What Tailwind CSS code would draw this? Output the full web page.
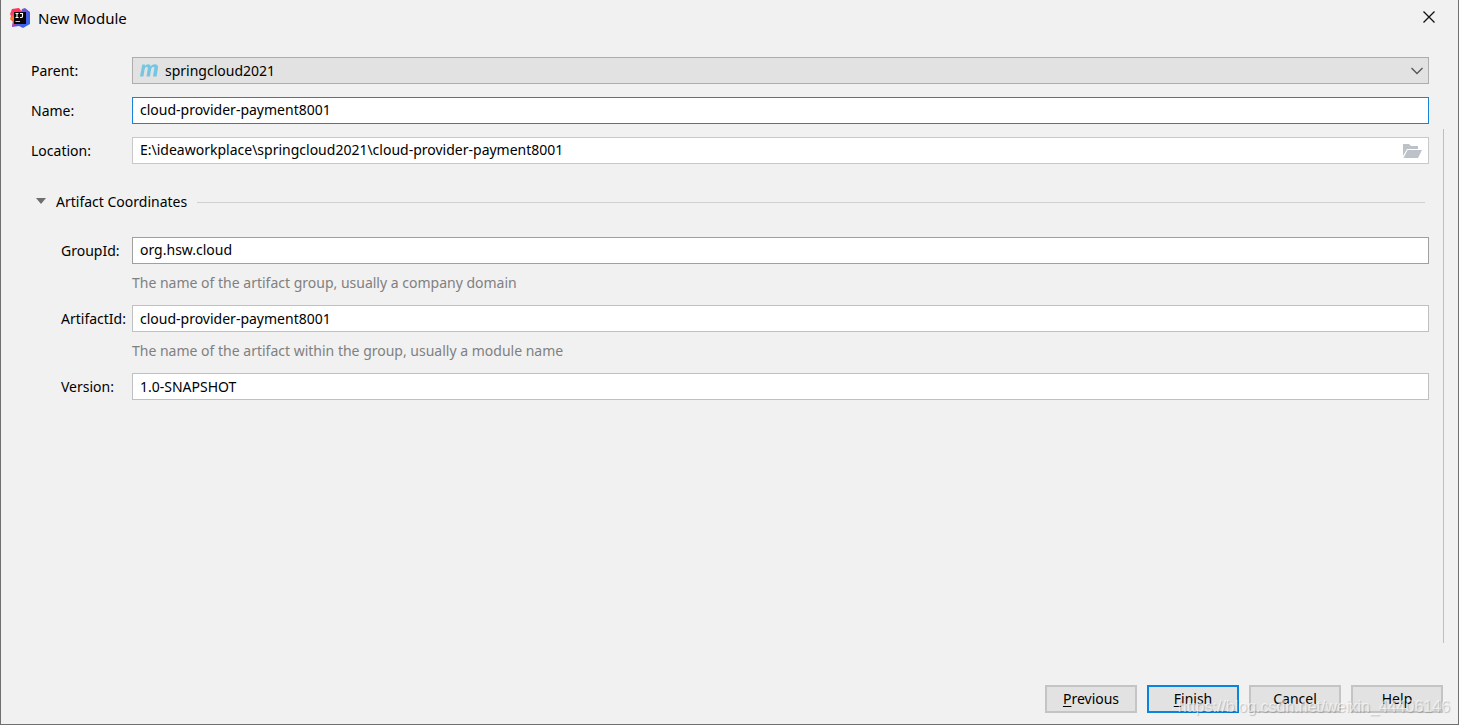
<!DOCTYPE html>
<html lang="en">
<head>
  <meta charset="utf-8">
  <title>New Module</title>
  <script src="https://cdn.jsdelivr.net/npm/@tailwindcss/browser@4"></script>
</head>
<body class="h-screen overflow-hidden bg-[#f1f1f1] text-black text-[14px] font-['Noto_Sans','Open_Sans',sans-serif]">
  <div class="relative flex flex-col h-full border-x border-b border-[#707070]">

    <!-- title bar -->
    <header class="flex items-center justify-between h-9 pl-[9px] pr-[23px] shrink-0">
      <div class="flex items-center gap-2">
        <svg class="size-5" viewBox="0 0 20 20" aria-hidden="true">
          <defs>
            <linearGradient id="ijLeft" x1="0" y1="0" x2="0" y2="1">
              <stop offset="0" stop-color="#fe2d5d"/>
              <stop offset="0.35" stop-color="#fb4560"/>
              <stop offset="0.55" stop-color="#fc801d"/>
              <stop offset="0.75" stop-color="#e0457a"/>
              <stop offset="1" stop-color="#b0409a"/>
            </linearGradient>
            <linearGradient id="ijRight" x1="0" y1="0" x2="1" y2="1">
              <stop offset="0" stop-color="#b04fc0"/>
              <stop offset="0.5" stop-color="#5a5ae0"/>
              <stop offset="1" stop-color="#1f6cf0"/>
            </linearGradient>
          </defs>
          <path d="M12 1 15 0l5 4v12l-7 4-4-2-7 1 1-6 8-9z" fill="url(#ijRight)"/>
          <path d="M2 1 9 0l3 4-6 10-1 3-3 2 1-5-3-3 1-3-1-2z" fill="url(#ijLeft)"/>
          <path d="M4 4h12v12H4z" fill="#0a0508"/>
          <path d="M5.500 5.500h3M7 5.500v4M5.500 9.500h3M10 5.500h2.500v3q0 1-1.500 1H10" fill="none" stroke="#fff" stroke-width="1.100"/>
          <path d="M5.500 13h4.500v1H5.500z" fill="#ccc"/>
        </svg>
        <h1 class="text-[15px]">New Module</h1>
      </div>
      <button type="button" aria-label="Close" class="pb-0.5">
        <svg class="size-3" viewBox="0 0 12 12" fill="none" stroke="#111" stroke-width="1.300"><path d="M.5.5l11 11M11.500.5l-11 11"/></svg>
      </button>
    </header>

    <div class="flex flex-1 gap-[14px] pl-[30px] pr-[14px] pb-[10px]">
      <form id="moduleForm" class="flex-1 pt-[21px]">
        <div class="flex flex-col gap-[13px]">
          <div class="flex items-center">
            <label for="parent" class="w-[101px]">Parent:</label>
            <div class="relative flex-1">
              <select id="parent" class="block appearance-none w-full h-[27px] pl-8 border border-[#adadad] bg-[#e2e2e2]">
                <option>springcloud2021</option>
              </select>
              <svg class="absolute left-2 top-[7px] w-5 h-[13px] pointer-events-none" viewBox="0 0 20 13" fill="#76c5e2">
                <path d="M2.300.5H5L4.800 2Q6.400.2 8.300.2 10.300.2 10.700 2.200 12.400.2 14.600.2 18.600.2 17.900 4.200L16.600 12.500H13L14.300 4.500Q14.600 2.800 13.300 2.800 11.600 2.800 11.100 5.300L9.900 12.500H6.500L7.800 4.500Q8.100 2.800 6.800 2.800 5.100 2.800 4.600 5.300L3.400 12.500H0z"/>
              </svg>
              <svg class="absolute right-[6px] top-[10px] w-3 h-2 pointer-events-none" viewBox="0 0 12 8" fill="none" stroke="#555" stroke-width="1.300"><path d="M.5 1 6 6.500 11.500 1"/></svg>
            </div>
          </div>
          <div class="flex items-center">
            <label for="name" class="w-[101px]">Name:</label>
            <input id="name" value="cloud-provider-payment8001" class="flex-1 h-[27px] px-[7px] pb-0.5 border border-[#1883d7] bg-white outline-none">
          </div>
          <div class="flex items-center">
            <label for="location" class="w-[101px]">Location:</label>
            <div class="relative flex-1">
              <input id="location" value="E:\ideaworkplace\springcloud2021\cloud-provider-payment8001" class="block w-full h-[27px] pl-[7px] pr-8 pb-0.5 border border-[#c8c8c8] bg-white outline-none">
              <button type="button" aria-label="Browse" class="absolute right-[7px] top-[7px]">
                <svg class="w-[19px] h-[14px]" viewBox="0 0 19 14" fill="#bcc2c7"><path d="M0 0h6l2 2h7v3H4L0 12z"/><path d="M4.500 6H19l-4 8H.5z"/></svg>
              </button>
            </div>
          </div>
        </div>

        <div class="flex items-center pt-7 pb-[25px]">
          <button type="button" id="toggle" aria-expanded="true" aria-controls="coordinates" class="flex items-center gap-[10px] pl-[5px] pb-0.5 h-5">
            <svg class="w-[10px] h-[6px]" viewBox="0 0 10 6"><path d="M0 0h10L5 6z" fill="#6e6e6e"/></svg>
            Artifact Coordinates
          </button>
          <div class="flex-1 h-px ml-[10px] mr-1 bg-[#d0d0d0]"></div>
        </div>

        <div id="coordinates">
          <div class="flex items-center">
            <label for="groupId" class="w-[101px] pl-[30px]">GroupId:</label>
            <input id="groupId" value="org.hsw.cloud" class="flex-1 h-[27px] px-[7px] pb-0.5 border border-[#a0a0a0] bg-white outline-none">
          </div>
          <p class="h-[41px] pl-[101px] leading-[38px] text-[#808080]">The name of the artifact group, usually a company domain</p>
          <div class="flex items-center">
            <label for="artifactId" class="w-[101px] pl-[30px]">ArtifactId:</label>
            <input id="artifactId" value="cloud-provider-payment8001" class="flex-1 h-[27px] px-[7px] border border-[#c0c0c0] bg-white outline-none">
          </div>
          <p class="h-[41px] pl-[101px] leading-[38px] text-[#808080]">The name of the artifact within the group, usually a module name</p>
          <div class="flex items-center">
            <label for="version" class="w-[101px] pl-[30px]">Version:</label>
            <input id="version" value="1.0-SNAPSHOT" class="flex-1 h-[27px] px-[7px] border border-[#c0c0c0] bg-white outline-none">
          </div>
        </div>
      </form>
      <div class="w-px mt-[93px] mb-8 bg-[#bfbfbf]"></div>
    </div>

    <footer class="flex justify-end gap-[10px] pr-[15px] pb-[11px]">
      <button type="button" class="w-[92px] h-7 pb-0.5 border-2 border-[#c4c4c4] bg-[#e2e2e2]"><u class="underline-offset-2">P</u>revious</button>
      <button type="submit" form="moduleForm" class="w-[92px] h-7 pb-0.5 border-2 border-[#0a84de] bg-[#e2e2e2]"><u class="underline-offset-2">F</u>inish</button>
      <button type="button" class="w-[92px] h-7 pb-0.5 border-2 border-[#c4c4c4] bg-[#e2e2e2]">Cancel</button>
      <button type="button" class="w-[92px] h-7 pb-0.5 border-2 border-[#c4c4c4] bg-[#e2e2e2]">Help</button>
    </footer>

    <span class="absolute right-2 bottom-[7px] text-[16px] leading-5 font-['Liberation_Sans',sans-serif] text-white/60 text-shadow-[1px_1px_1px_rgb(0_0_0/0.2)] pointer-events-none">https://blog.csdn.net/weixin_44406146</span>
  </div>

  <script>
    const toggle = document.getElementById("toggle");
    const coordinates = document.getElementById("coordinates");

    toggle.addEventListener("click", () => {
      coordinates.hidden = !coordinates.hidden;
      toggle.setAttribute("aria-expanded", !coordinates.hidden);
    });

    document.getElementById("moduleForm").addEventListener("submit", (e) => e.preventDefault());
  </script>
</body>
</html>
